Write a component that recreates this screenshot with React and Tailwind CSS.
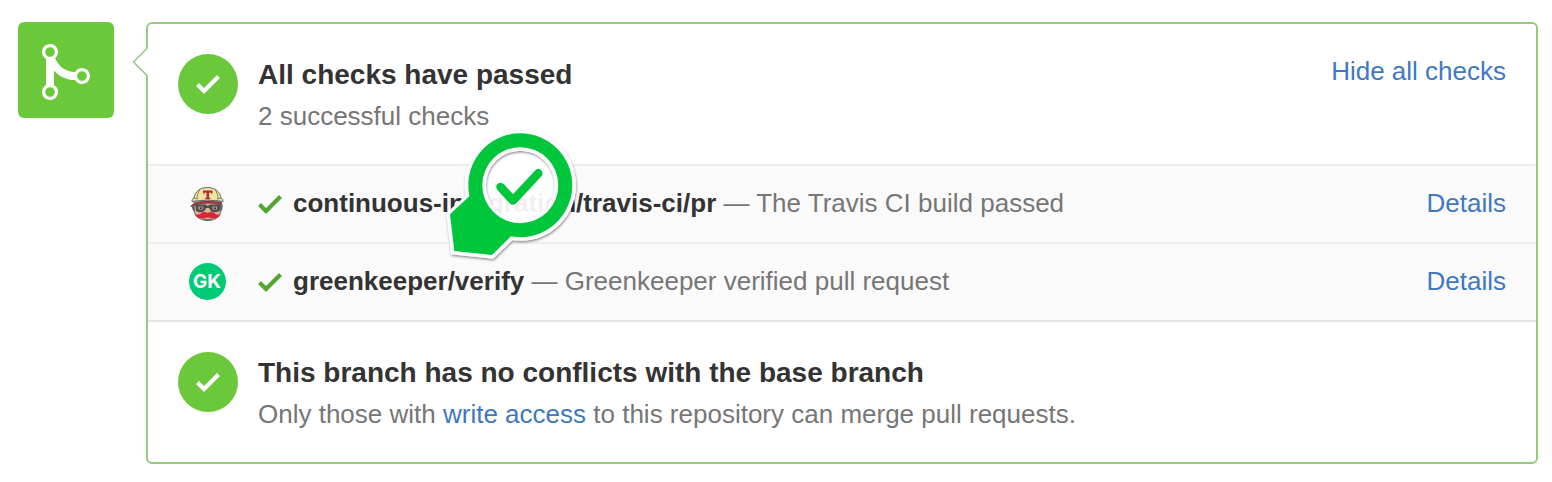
function CheckIcon({ className }) {
  return (
    <svg viewBox="0 0 12 16" className={`h-8 w-6 shrink-0 fill-current ${className}`} aria-hidden="true">
      <path d="M12 5l-8 8-4-4 1.5-1.5L4 10l6.5-6.5z" />
    </svg>
  );
}

function MergeIcon() {
  return (
    <svg viewBox="0 0 12 16" className="h-16 w-12 fill-white" aria-hidden="true">
      <path
        fillRule="evenodd"
        d="M10 7c-.73 0-1.38.41-1.73 1.02V8C7.22 7.98 6 7.64 5.14 6.98c-.75-.58-1.5-1.61-1.89-2.44A1.993 1.993 0 0 0 2 .99C.89.99 0 1.89 0 3a2 2 0 0 0 1 1.72v6.56c-.59.35-1 .99-1 1.72 0 1.11.89 2 2 2a1.993 1.993 0 0 0 1-3.72V7.67c.67.7 1.44 1.27 2.3 1.69.86.42 2.03.63 2.97.64v-.02c.36.61 1 1.02 1.73 1.02 1.11 0 2-.89 2-2 0-1.11-.89-2-2-2zm-6.8 6c0 .66-.55 1.2-1.2 1.2-.65 0-1.2-.55-1.2-1.2 0-.65.55-1.2 1.2-1.2.65 0 1.2.55 1.2 1.2zM2 4.2C1.34 4.2.8 3.65.8 3c0-.65.55-1.2 1.2-1.2.65 0 1.2.55 1.2 1.2 0 .65-.55 1.2-1.2 1.2zm8 6c-.66 0-1.2-.55-1.2-1.2 0-.65.55-1.2 1.2-1.2.65 0 1.2.55 1.2 1.2 0 .65-.54 1.2-1.2 1.2z"
      />
    </svg>
  );
}

function TravisAvatar() {
  return (
    <svg viewBox="0 0 36 36" className="size-9" aria-hidden="true">
      <path d="M5 16h27v9c-1 6-6 9.500-13 9.500S6 31 5 25z" fill="#d9ae90" stroke="#55575b" strokeWidth="0.800" />
      <path d="M1.500 20.500C5 16.500 11 15 18.500 15c6 0 10 .5 14 1.500v2.500C26 17 18 16.500 11 18c-3 .5-6 2-9.500 2.500z" fill="#c22e3f" stroke="#45474b" strokeWidth="0.600" />
      <path
        d="M3 15.500c0-2 .7-3 2-3.500C6 5 12 1.500 18.500 1.500S31 5 32 12c1.300.5 2 1.500 2 3.500-9-1.700-22-1.700-31 0z"
        fill="#f0e59f"
        stroke="#55575b"
        strokeWidth="0.900"
      />
      <path d="M11 3.500c-2 3-3 6-3 9.500M26 3.500c2 3 3 6 3 9.500M5 12l4 1M32 12l-4 1" fill="none" stroke="#8b8560" strokeWidth="1" />
      <path d="M14 4.500h9.500v3H22l-.4-1h-1.500v5.200h1.200v1.500h-5v-1.500h1.200V6.500H16l-.4 1H14z" fill="#b8283a" />
      <path d="M6.500 18.500h10l2.200 1.500 2.300-1.500h10.500l-.8 6c-1 2-8 2.500-9.200 0l-1.300-2.500H17l-1.300 2.500c-1.500 2.500-7.700 2-8.700 0z" fill="#4a4c50" />
      <path d="M9 20.500h5.500l-.8 3.300H9.500zM23 20.500h5.500l-.5 3.300h-4.200z" fill="#aa9686" />
      <path d="M11 21.500h2v1.500h-2zM25 21.500h2v1.500h-2z" fill="#35373a" />
      <path d="M2.500 20l3 .5.5 5-2-1zM34 18.500l-2.500 1.500-.5 5 2-1z" fill="#5b5d61" />
      <path d="M17.500 22.500h2.500l1.500 4h-5.500z" fill="#e0b699" />
      <path d="M18.700 27c3-1.800 5-1.300 7.300.7 2 1.200 3.500 1.300 5.500.3-1 3.500-4.500 5-7.500 4.500-2 0-3.300-1-5.300-1s-3.300 1-5.300 1c-3 .5-6.500-1-7.500-4.500 2 1 3.500.9 5.500-.3 2.300-2 4.300-2.500 7.300-.7z" fill="#d8273c" />
      <path d="M14.500 33c2.500 1.300 6 1.300 8.500 0" fill="none" stroke="#55575b" strokeWidth="1.200" />
    </svg>
  );
}

function GreenkeeperAvatar() {
  return (
    <span className="flex size-[37px] items-center justify-center rounded-full bg-[#00cb74] font-['Inter',sans-serif] text-[19px] leading-none font-bold text-white">
      GK
    </span>
  );
}

function StampOverlay() {
  return (
    <svg viewBox="440 125 145 145" className="pointer-events-none absolute top-[101px] left-[292px] h-[145px] w-[145px]" aria-hidden="true">
      <defs>
        <filter id="stamp-shadow" x="-10%" y="-10%" width="120%" height="120%">
          <feDropShadow dx="0.500" dy="1.500" stdDeviation="1" floodColor="#000" floodOpacity="0.45" />
        </filter>
        <mask id="stamp-hole" maskUnits="userSpaceOnUse" x="440" y="125" width="145" height="145">
          <rect x="440" y="125" width="145" height="145" fill="#fff" />
          <circle cx="520.3" cy="185.200" r="34.500" fill="#000" />
        </mask>
      </defs>
      <circle cx="520.3" cy="185.200" r="36" fill="#fff" fillOpacity="0.93" />
      <g filter="url(#stamp-shadow)">
        <g mask="url(#stamp-hole)" fill="#fff" stroke="#fff" strokeWidth="7" strokeLinejoin="miter">
          <circle cx="520.3" cy="185.200" r="52" />
          <path d="M471 195.500L450 214.500l4.300 36.500 37.700 4 20-19.500z" />
        </g>
      </g>
      <g fill="#00c63c">
        <path
          fillRule="evenodd"
          d="M520.3 133.200a52 52 0 1 1 0 104 52 52 0 1 1 0-104zm0 14a38 38 0 1 0 0 76 38 38 0 1 0 0-76z"
        />
        <path d="M469.500 196L450 214.300l4.300 36.700 37.700 4 20-19.700c-12-2-20-9-25-15-5-5-9-14-10-27z" />
      </g>
      <path
        d="M500.5 187l12.500 13.500 25.300-27.200"
        fill="none"
        stroke="#00c63c"
        strokeWidth="8.500"
        strokeLinecap="round"
        strokeLinejoin="round"
      />
    </svg>
  );
}

function StatusSection({ title, children, action }) {
  return (
    <section className="flex h-[140px] items-start px-[30px] pt-[30px]">
      <span className="mr-5 flex size-[60px] shrink-0 items-center justify-center rounded-full bg-[#6ac83a]">
        <CheckIcon className="text-white" />
      </span>
      <div className="grow">
        <h2 className="text-[28px] leading-[42px] font-bold text-[#333333]">{title}</h2>
        <p className="leading-10 text-[#767676]">{children}</p>
      </div>
      {action}
    </section>
  );
}

function CheckRow({ avatar, name, description }) {
  return (
    <li className="flex h-[78px] items-center border-t-2 border-[#eeeeee] bg-[#fafafa] px-[30px]">
      <span className="mr-[22px] flex w-[58px] shrink-0 justify-center pb-px">{avatar}</span>
      <CheckIcon className="mr-[11px] text-[#55a532]" />
      <p className="grow pb-0.5 leading-8 text-[#767676]">
        <strong className="text-[#333333]">{name}</strong> — {description}
      </p>
      <a href="#details" className="pb-0.5 leading-8 text-[#4078c0]">
        Details
      </a>
    </li>
  );
}

export default function App() {
  return (
    <main className="flex items-start bg-white pt-[22px] pr-[14px] pb-[18px] pl-[18px] font-['Liberation_Sans',Arial,sans-serif] text-[26px]">
      <div className="mr-8 flex size-24 shrink-0 items-center justify-center rounded-md bg-[#6ac83a] pt-1">
        <MergeIcon />
      </div>
      <div className="relative grow rounded-md border-2 border-[#95c97e] bg-white">
        <svg viewBox="0 0 18 32" className="absolute top-[22px] left-[-16px] h-8 w-[18px]" aria-hidden="true">
          <path d="M14 2h2v28h-2z" fill="#fff" />
          <path d="M16 1.500L1.500 16 16 30.500z" fill="#fff" />
          <path d="M15.500 2L1.500 16l14 14" fill="none" stroke="#95c97e" strokeWidth="1.500" />
        </svg>
        <StatusSection
          title="All checks have passed"
          action={
            <button type="button" className="leading-[34px] text-[#4078c0]">
              Hide all checks
            </button>
          }
        >
          2 successful checks
        </StatusSection>
        <ul className="border-b-2 border-[#e5e5e5]">
          <CheckRow
            avatar={<TravisAvatar />}
            name="continuous-integration/travis-ci/pr"
            description="The Travis CI build passed"
          />
          <CheckRow
            avatar={<GreenkeeperAvatar />}
            name="greenkeeper/verify"
            description="Greenkeeper verified pull request"
          />
        </ul>
        <StatusSection title="This branch has no conflicts with the base branch">
          Only those with{" "}
          <a href="#write-access" className="text-[#4078c0]">
            write access
          </a>{" "}
          to this repository can merge pull requests.
        </StatusSection>
        <StampOverlay />
      </div>
    </main>
  );
}
